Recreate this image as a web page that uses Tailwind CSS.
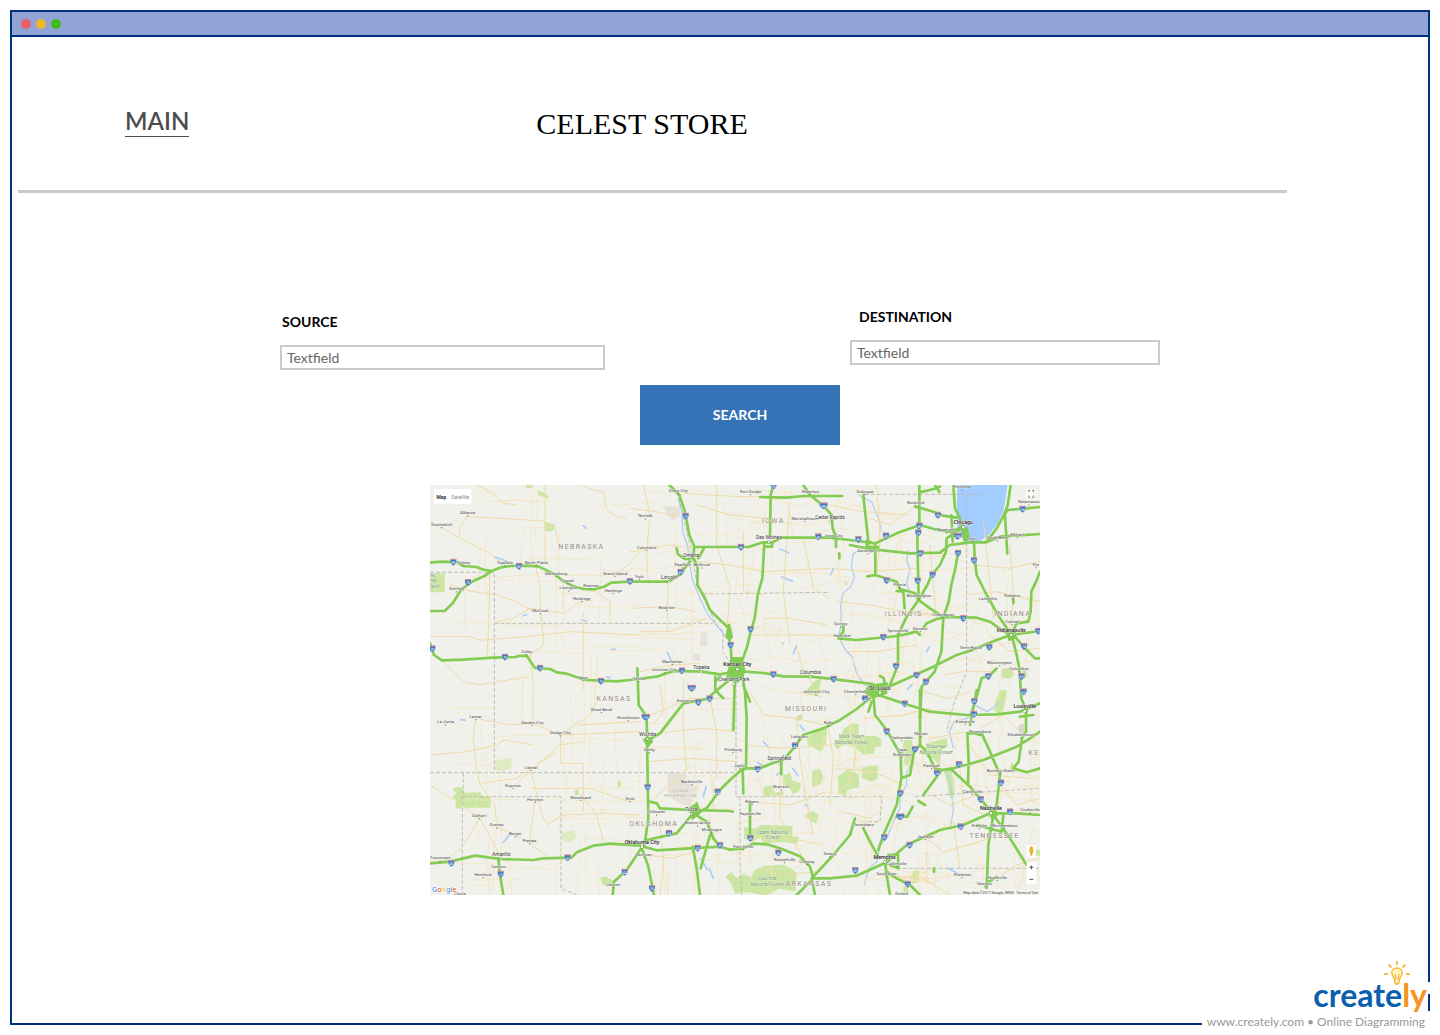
<!DOCTYPE html>
<html lang="en">
<head>
<meta charset="utf-8">
<meta name="viewport" content="width=device-width, initial-scale=1">
<title>Celest Store</title>
<script src="https://cdn.jsdelivr.net/npm/@tailwindcss/browser@4"></script>
</head>
<body class="flex min-h-screen bg-white p-2.5 font-['Lato',sans-serif]">
<div class="relative flex-1 border-2 border-[#003080] bg-white">
  <div class="flex h-[25px] items-center gap-[5px] border-b-2 border-[#003080] bg-[#91a3d5] pl-[9px]">
    <span class="size-2.5 rounded-full bg-[#eb5f6b]"></span>
    <span class="size-2.5 rounded-full bg-[#eeb72f]"></span>
    <span class="size-2.5 rounded-full bg-[#3dbb1b]"></span>
  </div>

  <header class="mr-[141px] ml-1.5 flex h-[156px] items-start border-b-3 border-[#cbcbcb] pt-[70px]">
    <a href="#" class="ml-[107px] border-b border-[#4d4d4d] pb-px text-2xl leading-7 font-semibold text-[#4d4d4d]">MAIN</a>
    <h1 class="ml-[347px] font-['Liberation_Serif',serif] text-[30px] leading-[34px] whitespace-nowrap text-black">CELEST STORE</h1>
  </header>

  <main class="mx-auto max-w-[880px] pt-[115px]">
    <form>
      <div class="flex items-start justify-between">
        <div class="mt-[5px] w-[325px]">
          <label for="source" class="block pl-0.5 text-sm leading-[18px] font-bold text-black">SOURCE</label>
          <input id="source" type="text" value="Textfield" class="mt-3.5 block h-[25px] w-full border-2 border-[#cbcbcb] bg-white px-[5px] text-sm text-[#666]">
        </div>
        <div class="w-[310px]">
          <label for="destination" class="block pl-[9px] text-sm leading-[18px] font-bold text-black">DESTINATION</label>
          <input id="destination" type="text" value="Textfield" class="mt-3.5 block h-[25px] w-full border-2 border-[#cbcbcb] bg-white px-[5px] text-sm text-[#666]">
        </div>
      </div>
      <button type="button" class="mt-[15px] ml-[360px] block h-[60px] w-[200px] bg-[#3673b6] text-sm font-bold text-white">SEARCH</button>
    </form>

    <svg id="map" class="mt-10 mb-20 ml-[150px] block w-[610px] font-['Roboto',sans-serif]" viewBox="0 0 1830 1230" role="img" aria-label="Road map of the central United States">
      <rect width="1830" height="1230" fill="#f1f1ec"/>
      <!-- parks -->
      <g fill="#cbe6a3">
        <path d="M0 265H44V322H0zM343 110l30 8 2 14-18 8-12-4zM322 15l20 8 14 10-2 8-30-12zM288 0h20v8l-18 2z"/>
        <g transform="translate(0 615)"><path d="M76 292l20-2 6 18 50-1 2 10 28 2v34h-76l-8-8-4 12-18-2 2-24-12-10 14-12-12-10zM510 562l20-2 22 14-4 14-30-4zM434 302l10-4 2 16-10 4zM562 275l10-4 2 18-10 4z"/><path opacity=".55" d="M196 212l46-8 4 30-30 10-20-6zM396 428l38-8 6 24-24 14-20-8z"/></g>
        <g transform="translate(600 615)"><path d="M532 142l30-20 30-14-4 48-14 30-26-14-16-6zM546 242l24-6 10 26-10 22-24 8zM460 256l20-8 8 24 26 8-6 24-20 8-10-22-20-6zM400 292l26-6 8 22 28-4-6 12-56 2zM524 378l24-16 18 14-8 26-20-12zM342 410l30 6 24-12 92 4-2 30 20 4-4 20-40-6-60 4-10-20-24 16-26-10zM286 560l18-14 16 18 20-12 24 10 8-20 30-14 60-4 24 14 14 12-4 54-50-8-36 20-60-10-34 6-14-34zM500 80l14-8 6 10-20 14zM520 12l40-2 16 14-30-10zM550 0h22v10h-22z"/></g>
        <g transform="translate(1200 615)"><path d="M40 118l24-18 22 2 0 36 50 0 18 8v24h-20l-2 20-30 4-30-24-30-6-22 14-10-18 24-20zM22 262l30-24 34 14 2 40-36 8-4 20-24-10 2-34zM94 232l50-6-2 40-16 10-30-12zM222 150l24 0 4 40-14 40-16-10 6-30-8-20zM290 160l60-16 4 24-20 14-4 44-20-20-20-4-12-20zM340 242l22-8 14 66-8 28-12-10-4-40zM500 24l12-24h18l-8 60-16 18-16-22zM545 215l10 14-6 20-10-12zM252 542l16-2v36l-22 6-4-22zM220 590h14v25h-14zM600 480h30v18h-30z"/><path fill="#dcd8cc" d="M562 110l12-10 10 4-2 24-14 4z"/></g>
        <path d="M1715 553l30-6 8 24-20 10-18-4zM1775 545l14 4 2 26-10 8zM1150 590l24-12-6 36-30 16-14-6zM1054 473l8-2v8h-8z"/>
      </g>
      <g fill="#e3dfd3" opacity=".8"><path d="M712 862l60 6-4 24 38 12-18 36-2 28-30-10-42-24zM700 64h50v30l-24 12-16-20zM812 440l20 4v40h-22zM790 505h20v22h-20zM1242 288h12v12h-12z"/></g>
      <!-- water -->
      <path d="M1582 0h150l-4 34-8 46-18 36-26 34-30 22-32 0-22-16-10-30-2-30z" fill="#a3ccff"/>
      <g id="ponds" fill="none" stroke="#a9cdf8" stroke-width="5" stroke-linecap="round">
        <path d="M195 216l34 12M460 122l8 8M455 405l14 3M280 392l10-3M545 493l12 0M530 576l10 2M92 704l14 2M220 1072l20-24M1050 192l26 12M1055 276l32 12M712 502l12 26M1090 506l10-26M820 935l8-30M1000 770l14 16M982 832l14 8M1088 850l16 22M1110 720l12 16M838 1150l12 30M812 1120l20 34M1040 870l14-10M1125 960l10 4M1434 612l12-14M1490 500l8-14M1556 1150l30 18 40 2M1210 250l-8 20"/>
      </g>
      <g fill="none" stroke="#b1cff0" stroke-width="4">
        <path d="M744 40l12 40 2 60 14 40 14 100 24 60 24 50 50 60 16 20M1285 30l40 20 20 50 10 40M1290 195l-20 10-6 40 10 30-12 30-24 20-6 40 2 50-8 40 20 40 20 20 14 50 22 34 40 10M1435 195l-5 30 10 30-10 40 10 30M1450 830l-20 30 0 40-20 30 0 40-20 40-20 50-20 20-10 50-22 20-16 50M1550 855l14 60 6 60-10 60M1570 790l-12-50 14-30 40-10 20-40 40 20 40-30"/>
      </g>
      <!-- state boundaries -->
      <g fill="none" stroke="#bcbcb8" stroke-width="3" stroke-dasharray="12 6">
        <path d="M0 262H193V863M193 415H850M0 863H920M100 863V935H97V1230M97 935H393V1210L440 1230M820 327L1200 322M746 40L780 180 802 300 860 420 880 440 878 500 918 560V935H1220M930 935V1140L935 1230M1305 28H1660M1610 28V560L1570 660 1550 740M1220 935H1355L1350 1010H1300M1455 935L1830 910M1400 1150H1830"/>
      </g>
      <!-- minor roads -->
      <g id="faint" fill="none" stroke="#f4e4bd" stroke-width="2"></g>
      <g fill="none" stroke="#efdba6" stroke-width="3" stroke-linejoin="round">
        <path d="M0 108L36 128 100 165 180 205 215 238M112 94L340 108 375 128 385 175M112 94L88 130 90 155M345 0V240M140 0L180 20 220 55 262 60M318 245L330 310 332 380 342 480M60 300L130 320 200 330 260 350 310 380M180 255L175 450 170 520M0 455L120 455 150 466 290 455 420 440 630 450M35 525L100 590 150 600 200 590 300 575M342 480L300 510M200 410L250 400 300 370 400 385 450 350 490 345M400 290V375M455 0L490 15 520 20 530 75 560 95 590 100M550 272L600 235 630 200M490 315L540 350V420M460 380V615M300 510L310 600 308 715 392 750 630 740M138 700L130 760 140 850 150 900 195 960 200 1025M0 810L110 800 200 780 220 765 310 780M250 905L310 850 390 780 460 770M303 860L340 1000 355 1020M150 895L260 880 380 800M392 750V835H460V980M0 900L80 950 148 1000 95 1090 40 1130M150 1000L215 1120M315 950L298 1075 256 1050 200 1025M298 1075L360 1120M300 910H480L540 930 600 950M450 925L500 990 520 1070M350 1020L400 990 520 985 630 990M138 700L240 720 310 715M392 750L480 690 500 650M450 720L630 710"/>
        <path d="M600 70L680 80 740 95M640 0L660 90 650 200 655 300M650 190L720 180 790 190M600 200L650 195M715 290L712 370 712 440M600 370L720 365 800 380M630 440L720 440 830 400M800 230L900 240 1000 260 1200 250M800 60L900 90 1010 100M760 25L840 30 930 35 990 35M860 0V180L900 310 890 450M940 140L940 320 1000 330M1080 50L1070 170 1060 320 1080 480M1120 160L1150 310 1200 340M1000 400L1080 400 1190 420M960 450L1060 450 1220 450M1100 480L1120 560 1150 600M630 560L720 540 810 535M690 600L700 680 670 720M640 700L780 640 920 640M650 750L720 740 820 730 920 740M760 580L760 740 770 860M840 640L860 740 860 880M650 830L780 820 920 830M660 950L720 900 780 840M850 880L850 980M690 1010L700 1140 690 1230M650 1110L730 1120 790 1100M960 620L1000 690 1100 700 1180 720M950 780L1050 790 1200 780M1050 830L1050 1000 1120 1120M1100 700L1110 820 1130 950 1150 1050M960 950L1080 960 1190 920M1190 700L1210 820 1200 960M960 1060L1080 1060 1180 1080M980 1150L1060 1170 1160 1160M1000 1230L1060 1170"/>
        <path d="M1200 60L1300 80 1440 90M1210 250L1300 260 1460 250M1340 0L1350 150 1340 280M1500 180L1510 300 1520 400M1220 350L1320 360 1420 380 1540 390M1250 500L1340 500 1460 480M1320 100L1380 120 1460 60M1630 240L1740 250 1830 230M1660 110L1670 200 1690 400M1600 330L1700 320 1830 350M1740 180L1750 330 1742 440M1680 450L1740 500 1830 490M1540 570L1600 560 1700 560M1480 620L1550 640 1620 620M1300 700L1420 690 1500 670M1220 850L1330 860 1420 900M1280 760L1270 880 1220 930M1230 980L1320 1000 1360 970M1500 760L1610 740M1500 930L1560 960 1640 930M1590 850L1600 960 1690 1000M1480 1050L1540 1100 1680 1060M1490 1100L1490 1200M1570 1010L1590 1150M1650 730L1720 690 1770 740M1620 780L1680 870 1800 880M1710 900L1760 960 1830 940M1700 1180L1760 1140 1830 1120M1340 1170L1480 1180 1560 1230M1420 1180L1490 1160M1550 1020L1490 1070"/>
      </g>
      <!-- interstates -->
      <g id="roads" fill="none" stroke="#82cc51" stroke-width="8" stroke-linejoin="round" stroke-linecap="round">
        <path d="M0 233L30 230 80 231 100 243 140 246 160 254 185 258 210 248 240 243 290 242 325 244 350 256 375 268 395 285 430 304 460 312 490 313 520 306 545 293 600 290 716 290 750 268 785 222M0 378H44L68 355 95 312 130 288 165 272 185 258M0 475L12 510 36 526 100 524 190 518 258 516 265 513 290 512 315 549 360 552 380 562 410 566 450 580 470 585 560 589 600 585 680 575 730 558 815 560 870 568 920 558 1000 564 1060 574 1140 575 1200 581 1240 586 1330 597"/>
        <path d="M718 0L748 30 765 80 778 150 793 185 790 215 803 250 802 300 825 340 840 375 870 405 897 430 897 460 902 480 905 530M793 186H955L1000 172H1027L1026 185H1003M824 186L805 220M740 190L744 208 765 222H790M1027 172L1055 158H1200L1285 168 1336 175 1400 145 1470 120 1520 134 1560 140 1600 125M1030 0L1022 30 1020 155M990 36L1070 38 1120 33H1200L1237 33M1120 0L1140 30 1180 62 1205 90 1208 130 1218 155 1218 186M1003 172L997 280 984 325 974 400 962 440 950 490 935 530M622 550L626 660 650 695 655 1000 645 1070M1260 180L1320 192 1440 205 1530 203 1560 180 1620 172 1668 172 1710 155 1830 147M1300 30L1304 70 1314 160 1310 180M1336 180V270L1312 274M1336 270L1400 290 1410 312 1455 325 1466 345 1500 370 1540 396 1640 398 1680 410 1710 432 1742 450M1468 0V110L1462 160 1466 340M1468 22L1500 15 1530 5M1455 65L1475 70 1510 80 1540 92 1580 98M1515 0L1528 20M1320 170L1310 186H1345L1336 196M1570 0L1575 70 1590 100 1608 165M1564 90L1568 170M1600 125L1550 160 1548 200 1530 240 1505 270 1492 300 1466 345 1430 395 1404 450V540L1390 575 1380 600M1585 200L1576 250 1564 300 1556 350 1540 398 1534 500 1514 560 1475 605 1470 700M1632 172L1634 220 1640 270 1670 330 1710 400 1745 450M1742 0L1733 60 1722 90 1700 130 1670 170M1722 90L1734 75 1790 70 1830 66M1725 90L1732 205M1742 450L1760 415 1795 410 1802 380 1804 320 1818 290 1830 260M1742 450L1830 438M1742 450L1700 465 1620 497 1580 510 1510 545 1400 595 1375 605 1345 600M1745 450L1760 510 1768 550 1774 640 1790 680M1750 450L1790 495 1815 520H1830M1640 635L1655 580 1680 570 1700 550M1400 318L1420 320 1424 370M1225 460L1280 465 1404 453 1460 440 1470 450M1240 420V440L1225 458M1480 430L1490 415 1520 402 1540 398M1228 205V220M1350 573L1362 580 1364 600M1750 340V355"/>
        <path d="M0 1135L60 1130 135 1112 210 1122 310 1125 340 1120 425 1118 440 1102 490 1082 540 1076 630 1082 680 1096 780 1090 870 1085 900 1094 940 1090 970 1076 1010 1078 1050 1090 1110 1114 1140 1145 1150 1180 1100 1230M205 1120L210 1170 220 1230M548 1230L552 1190 590 1155 635 1088 655 1145 672 1230M640 1085L650 1065 740 1045 785 990 830 970 870 915 900 885 940 850 990 850 1030 833 1060 825 1090 790 1120 750 1180 730 1230 705 1280 672 1320 640M655 765L690 745 760 655 830 642 865 612 910 575M660 950L680 955 690 970 780 975 900 978 908 980M800 955L790 985 830 1010 850 1060 870 1085M840 1050L812 1150M788 1085L800 1150 810 1230M915 560L910 735M935 560L945 620 950 700 948 850 938 855 940 925M856 575V615L880 640M870 575L856 590M940 600L960 650M1054 830V868M960 950V1060M1145 1180L1210 1110 1260 1050 1275 1000M1145 1180H1200L1280 1172 1370 1132 1430 1080 1530 1035 1600 1020 1680 985 1760 985 1830 990M1145 1180L1155 1230M1330 630L1335 690 1370 735 1412 810 1414 880 1400 960 1360 1050 1345 1095M1414 880L1440 870 1452 800 1470 780 1470 615M1345 630L1420 655 1500 680 1610 690 1700 688 1770 680 1830 655M1470 780L1490 800 1515 850 1535 855 1570 850 1660 825 1760 785 1800 760 1830 740M1535 855L1480 930M1465 948L1485 960M1560 850L1620 905 1688 985M1612 745L1655 745 1680 800 1710 870 1700 960 1688 985M1612 745L1616 830 1614 900M1640 615L1620 720M1650 750L1620 740M1788 680L1788 740 1776 760 1766 830 1750 850 1790 862 1830 850M1770 695L1810 690M1690 990L1675 1080 1670 1210M1690 990L1740 1060 1790 1140M1720 990L1715 1040 1640 1020M1300 1030L1320 1070 1345 1115M1365 1130L1370 1170 1380 1230M1370 1160L1400 1180 1440 1200 1470 1230M1375 1110L1404 1108 1405 1150 1380 1140M1400 995L1432 995 1448 965M1512 1150V1160M1670 1195L1700 1175M1325 650L1315 680"/>
        <path fill="#82cc51" d="M905 520h28l10 40-20 30-30-15zM1340 600l30-4-2 28-38 12-24-14 10-16zM890 455l7-35 8 35-6 8zM780 970l20-12 10 24-22 18zM643 765l14-6 8 10-10 12zM1732 442l18-4 6 18-18 8zM1598 140l12-10 6 30-12 6zM1680 985l14-8 8 10-14 14z"/>
      </g>
      <g id="shields"></g>
      <g id="labels" text-anchor="middle" fill="#4a4a4a" stroke="#f5f5f2" stroke-width="2" paint-order="stroke"></g>
      <!-- map controls -->
      <rect x="12" y="12" width="112" height="45" rx="3" fill="#fff"/>
      <g text-anchor="middle" font-size="15"><text x="34" y="41" font-weight="600" fill="#222">Map</text><text x="91" y="41" fill="#888">Satellite</text></g>
      <rect x="1788" y="12" width="28" height="28" fill="#fff"/>
      <path d="M1796 22v-6h5M1806 16h5v6M1811 31v6h-5M1801 37h-5v-6" fill="none" stroke="#777" stroke-width="3"/>
      <rect x="1790" y="1080" width="28" height="37" fill="#fff"/>
      <path d="M1804 1084a5 5 0 0 1 4 8l3 4-3 9-2 7h-4l-2-7-3-9 3-4a5 5 0 0 1 4-8z" fill="#eead30"/>
      <rect x="1790" y="1130" width="28" height="66" fill="#fff"/>
      <path d="M1798 1147h12M1804 1141v12M1798 1183h12" stroke="#555" stroke-width="3"/>
      <rect x="1595" y="1212" width="235" height="18" fill="#f5f5f2" opacity=".8"/>
      <g font-size="11" fill="#444"><text x="1600" y="1226">Map data ©2017 Google, INEGI</text><text x="1824" y="1226" text-anchor="end">Terms of Use</text></g>
      <text x="6" y="1221" font-size="23" stroke="#fff" stroke-width="3" paint-order="stroke"><tspan fill="#4285f4">G</tspan><tspan fill="#ea4335">o</tspan><tspan fill="#fbbc05">o</tspan><tspan fill="#4285f4">g</tspan><tspan fill="#34a853">l</tspan><tspan fill="#ea4335">e</tspan></text>
    </svg>
  </main>

  <footer class="absolute -right-0.5 -bottom-2 h-[71px] w-[228px]">
    <span class="absolute right-0 bottom-[37px] h-3 w-1 bg-white"></span>
    <span class="absolute right-0 bottom-0 h-5 w-full bg-white"></span>
    <a href="#" aria-label="Creately" class="absolute right-[3px] bottom-4 text-[32px] leading-10 font-bold text-[#0a60ae]">create<span class="text-[#f7941e]">ly</span></a>
    <svg class="absolute top-0 right-[19px] h-7 w-[28px]" viewBox="0 0 28 28" fill="none" aria-hidden="true">
      <path d="M14 1v4M5.500 4.500l3 3M22.500 4.500l-3 3M1 14.500l4-1M27 14.500l-4-1" stroke="#f5a623" stroke-width="1.500"/>
      <path d="M14 8c-4 0-6 3-5 6 .6 2 2 3 2.500 6l.5 3q2 1.500 4 0l.5-3c.5-3 2-4 2.500-6 1-3-1-6-5-6z" fill="#fff3c4" stroke="#f9c23c" stroke-width="1.500"/>
      <path d="M12 14l1 6M16 14l-1 6M12 24h4" stroke="#f5a623"/>
    </svg>
    <p class="absolute right-[5px] bottom-px text-xs leading-4 whitespace-nowrap text-[#999]">www.creately.com • Online Diagramming</p>
  </footer>
</div>

<script>
const SVG = 'http://www.w3.org/2000/svg';
function add(parent, tag, attrs, text) {
  const el = document.createElementNS(SVG, tag);
  for (const k in attrs) el.setAttribute(k, attrs[k]);
  if (text) el.textContent = text;
  parent.appendChild(el);
}
// County roads: lightly jittered grid lines behind the highways
let seed = 7;
const rnd = () => (seed = (seed * 16807) % 2147483647) / 2147483647;
const faint = document.getElementById('faint');
for (let i = 0; i < 360; i++) {
  let x = Math.pow(rnd(), 0.7) * 1830, y = rnd() * 1230, d = `M${x | 0} ${y | 0}`;
  const vertical = rnd() > 0.5;
  for (let j = 0; j < 4; j++) {
    const step = 20 + rnd() * 45, drift = (rnd() - 0.5) * (x > 800 ? 34 : 10);
    x += vertical ? drift : step; y += vertical ? step : drift;
    if (x > 1560 && y < 190) break;
    d += `L${x | 0} ${y | 0}`;
  }
  add(faint, 'path', { d });
}
// Interstate shields: x, y, route number
const shields = [[70,231,80],[267,243,80],[114,292,76],[600,289,80],[7,491,70],[225,516,70],[330,549,70],[513,588,70],[767,93,29],[933,186,80],[752,261,80],[1031,2,35],[1181,62,380],[1165,155,80],[962,433,35],[902,480,29],[756,557,70],[785,609,335],[1030,568,70],[1211,582,70],[1285,163,80],[1368,152,80],[1468,122,88],[1465,143,39],[1524,90,90],[1583,153,294],[1471,205,80],[1584,204,57],[1632,226,65],[1508,269,55],[1463,287,39],[1370,286,74],[1600,400,74],[1360,456,72],[1398,543,55],[1460,570,70],[1488,590,57],[1678,486,70],[1782,484,74],[1825,438,70],[1775,574,65],[1781,620,65],[1675,574,69],[1778,72,94],[64,1134,40],[212,1167,27],[413,1118,40],[584,1161,44],[647,696,135],[653,906,35],[805,652,35],[839,641,35],[717,1044,44],[863,920,44],[983,852,44],[1095,782,44],[803,1089,40],[870,1081,40],[961,1059,49],[1045,1103,40],[666,1210,35],[1305,641,44],[1424,656,64],[1370,739,55],[1455,793,57],[1521,864,24],[1587,838,24],[1633,649,69],[1632,687,64],[1713,893,65],[1652,943,24],[1740,980,40],[1592,1025,40],[1411,925,55],[1411,995,155],[1363,1057,55],[1439,1080,40],[1276,1156,40],[1433,1197,22]];
const shieldLayer = document.getElementById('shields');
for (const [x, y, n] of shields) {
  const w = n > 99 ? 12 : 9;
  add(shieldLayer, 'path', { d: `M${x - w} ${y - 9}H${x + w}Q${x + w + 3} ${y + 5} ${x} ${y + 11}Q${x - w - 3} ${y + 5} ${x - w} ${y - 9}z`, fill: '#4577b8', stroke: '#dfe6ee', 'stroke-width': 1 });
  add(shieldLayer, 'path', { d: `M${x - w} ${y - 8}H${x + w}`, stroke: '#dc8a8e', 'stroke-width': 3 });
  add(shieldLayer, 'text', { x, y: y + 6, 'text-anchor': 'middle', 'font-size': 10, fill: '#fff' }, String(n));
}
// Place names: x, baseline, name
const towns = [[113,88,'Alliance'],[35,123,'Scottsbluff'],[102,236,'Sidney'],[225,238,'Ogallala'],[319,236,'North Platte'],[378,270,'Gothenburg'],[413,291,'Cozad'],[417,313,'Lexington'],[483,305,'Kearney'],[555,269,'Grand Island'],[550,321,'Hastings'],[455,345,'Holdrege'],[331,382,'McCook'],[79,316,'Sterling'],[290,504,'Colby'],[459,581,'Hays'],[626,586,'Salina'],[745,22,'Sioux City'],[646,97,'Norfolk'],[650,191,'Columbus'],[628,278,'York'],[758,244,'Papillion'],[816,244,'Bellevue'],[710,371,'Beatrice'],[962,24,'Fort Dodge'],[1141,24,'Waterloo'],[1124,105,'Marshalltown'],[1212,155,'Iowa City'],[727,534,'Manhattan'],[703,558,'Junction City'],[1158,625,'Jefferson City'],[1305,23,'Dubuque'],[1457,57,'Rockford'],[1313,201,'Davenport'],[1549,139,'Naperville'],[1596,10,'Kenosha'],[1628,166,'Gary'],[1702,163,'South Bend'],[1762,152,'Elkhart'],[1797,55,'Kalamazoo'],[1818,243,'For'],[1409,304,'Peoria'],[1467,337,'Bloomington'],[1540,393,'Champaign'],[1471,435,'Decatur'],[1403,442,'Springfield'],[1232,421,'Quincy'],[1236,457,'Hannibal'],[1674,346,'Lafayette'],[1747,337,'Kokomo'],[1747,413,'Carmel'],[1622,492,'Terre Haute'],[1709,537,'Bloomington'],[1767,554,'Columbus'],[1277,623,'Chesterfield'],[47,715,'La Junta'],[137,699,'Lamar'],[307,716,'Garden City'],[391,748,'Dodge City'],[514,678,'Great Bend'],[595,702,'Hutchinson'],[303,852,'Liberal'],[249,905,'Guymon'],[315,947,'Perryton'],[452,941,'Woodward'],[600,945,'Enid'],[148,996,'Dalhart'],[200,1024,'Dumas'],[256,1051,'Borger'],[299,1071,'Pampa'],[30,1123,'Tucumcari'],[206,1150,'Canyon'],[159,1173,'Hereford'],[90,1229,'Clovis'],[549,1202,'Lawton'],[642,1112,'Norman'],[765,650,'Emporia'],[658,799,'Derby'],[909,798,'Pittsburg'],[929,846,'Joplin'],[1108,758,'Lebanon'],[1196,718,'Rolla'],[785,894,'Bartlesville'],[680,985,'Stillwater'],[803,1018,'Broken Arrow'],[845,1039,'Muskogee'],[966,954,'Rogers'],[961,990,'Fayetteville'],[940,1089,'Fort Smith'],[1054,910,'Branson'],[1064,1128,'Russellville'],[1131,1133,'Conway'],[1200,1110,'Searcy'],[1415,762,'Carbondale'],[1473,751,'Marion'],[1416,798,'Cape'],[1416,812,'Girardeau'],[1505,846,'Paducah'],[1606,713,'Evansville'],[1651,744,'Owensboro'],[1773,754,'Elizabethtown'],[1712,861,'Bowling Green'],[1627,924,'Clarksville'],[1800,979,'Cookeville'],[1648,1025,'Franklin'],[1723,1025,'Murfreesboro'],[1486,1058,'Jackson'],[1301,1024,'Jonesboro'],[1400,1140,'Collierville'],[1369,1170,'Southaven'],[1596,1173,'Florence'],[1415,1229,'Oxford'],[1664,1200,'Decatur'],[1702,1182,'Huntsville']];
const midCities = [[783,216,'Omaha'],[717,281,'Lincoln'],[1017,162,'Des Moines'],[1200,102,'Cedar Rapids'],[912,589,'Overland Park'],[814,552,'Topeka'],[1141,567,'Columbia'],[214,1112,'Amarillo'],[653,753,'Wichita'],[1048,825,'Springfield'],[784,979,'Tulsa']];
const bigCities = [[1600,118,'Chicago'],[922,544,'Kansas City'],[1350,614,'St. Louis'],[1744,441,'Indianapolis'],[636,1076,'Oklahoma City'],[1784,670,'Louisville'],[1683,976,'Nashville'],[1364,1122,'Memphis']];
const states = [[454,193,'NEBRASKA'],[1030,113,'IOWA'],[1421,393,'ILLINOIS'],[1748,393,'INDIANA'],[552,649,'KANSAS'],[1128,679,'MISSOURI'],[671,1022,'OKLAHOMA'],[1137,1202,'ARKANSAS'],[1694,1060,'TENNESSEE'],[1812,811,'KE']];
const parks = [[1264,758,'Mark Twain'],[1264,776,'National Forest'],[1518,789,'Shawnee'],[1518,807,'National Forest'],[1028,1046,'Ozark National'],[1028,1063,'Forest'],[1011,1185,'Ouachita'],[1011,1202,'National Forest']];
const labels = document.getElementById('labels');
for (const [x, y, t] of states) add(labels, 'text', { x, y, 'font-size': 21, 'letter-spacing': 4, fill: '#938b7d' }, t);
for (const [x, y, t] of parks) add(labels, 'text', { x, y, 'font-size': 15, 'font-style': 'italic', fill: '#6c9a55' }, t);
for (const [x, y, t] of [[752,922,'OSAGE'],[752,936,'RESERVATION']]) add(labels, 'text', { x, y, 'font-size': 12, 'letter-spacing': 2, fill: '#a59f92' }, t);
for (const [x, y, t] of [[10,275,'iec'],[11,291,'nal'],[15,308,'land']]) add(labels, 'text', { x, y, 'font-size': 15, 'font-style': 'italic', fill: '#6c9a55' }, t);
for (const [x, y, t] of towns) {
  add(labels, 'text', { x, y, 'font-size': 13 }, t);
  add(labels, 'circle', { cx: x, cy: y + 5, r: 2, fill: '#777', stroke: 'none' });
}
for (const [x, y, t] of midCities) {
  add(labels, 'text', { x, y, 'font-size': 15, fill: '#333' }, t);
  add(labels, 'circle', { cx: x, cy: y + 9, r: 3, fill: '#fff', stroke: '#555' });
}
for (const [x, y, t] of bigCities) {
  add(labels, 'text', { x, y, 'font-size': 16, 'font-weight': 500, fill: '#222' }, t);
  add(labels, 'circle', { cx: x, cy: y + 9, r: 4, fill: '#fff', stroke: '#444' });
}
</script>
</body>
</html>
